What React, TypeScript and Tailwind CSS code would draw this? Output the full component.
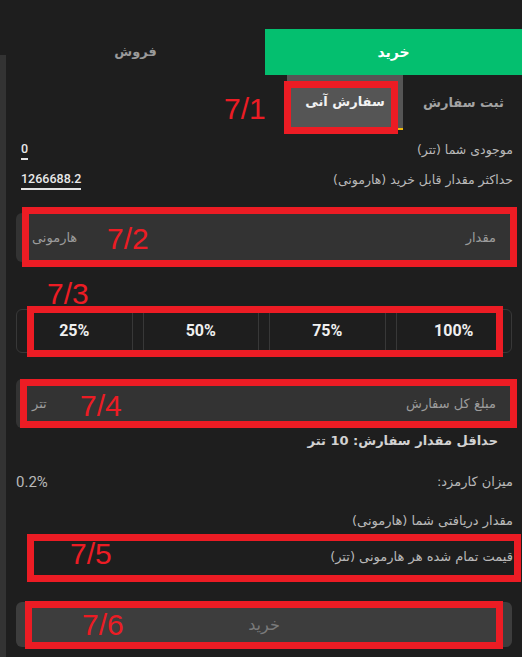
const fa = { fontFamily: "'DejaVu Sans', 'Noto Sans', sans-serif" };

function Row({ label, value, underline }: { label: string; value?: string; underline?: boolean }) {
  return (
    <div className="flex h-[30px] items-center justify-between pr-[9px] pl-[15px]">
      <span className="text-[12.5px] text-[#b9b9b9]">{label}</span>
      {value && (
        <span
          className={`text-[12.5px] font-medium text-[#e8e8e8] ${underline ? 'border-b-2 border-[#e4e4e4] leading-[18px]' : ''}`}
          style={{ fontFamily: 'Roboto, sans-serif' }}
        >
          {value}
        </span>
      )}
    </div>
  );
}

function Field({ label, unit }: { label: string; unit: string }) {
  return (
    <div className="mx-[10px] flex h-[49px] items-center justify-between rounded-md bg-[#333333] pr-[16px] pl-[16px]">
      <span className="text-[13px] text-[#9c9c9c]">{label}</span>
      <span className="text-[13px] text-[#9c9c9c]">{unit}</span>
    </div>
  );
}

const marks = [
  { l: 284, t: 81, w: 114, h: 53 },
  { l: 22, t: 207, w: 495, h: 60 },
  { l: 27, t: 306, w: 476, h: 51 },
  { l: 20, t: 379, w: 497, h: 49 },
  { l: 27, t: 534, w: 494, h: 48 },
  { l: 25, t: 601, w: 478, h: 48 },
];

const tags = [
  { s: '7/1', l: 224, t: 94 },
  { s: '7/2', l: 107, t: 224 },
  { s: '7/3', l: 47, t: 279 },
  { s: '7/4', l: 80, t: 391 },
  { s: '7/5', l: 70, t: 539 },
  { s: '7/6', l: 82, t: 610 },
];

export default function App() {
  return (
    <div className="relative flex h-[657px] w-[522px] overflow-hidden bg-[#1e1e1e]" style={fa}>
      {/* scroll rail */}
      <div className="mt-[55px] w-[6px] shrink-0 bg-[#333333]" />

      <div dir="rtl" className="flex min-w-0 flex-1 flex-col">
        {/* buy / sell */}
        <div className="mt-[29px] flex h-[46px]">
          <div className="flex w-[257px] items-center justify-center bg-[#04bf6f] text-[14px] font-bold text-white">خرید</div>
          <div className="flex flex-1 items-center justify-center text-[13px] font-bold text-[#9a9a9a]">فروش</div>
        </div>

        {/* order type */}
        <div className="flex h-[55px] gap-[2px]">
          <div className="flex w-[117px] items-center justify-center text-[13px] font-bold text-[#a3a3a3]">ثبت سفارش</div>
          <div className="flex w-[116px] items-center justify-center border-b-2 border-[#f0b90b] bg-[#555555] text-[13px] font-bold text-[#f2f2f2]">
            سفارش آنی
          </div>
        </div>

        <div className="mt-[5px]">
          <Row label="موجودی شما (تتر)" value="0" underline />
          <Row label="حداکثر مقدار قابل خرید (هارمونی)" value="1266688.2" underline />
        </div>

        <div className="mt-[18px]">
          <Field label="مقدار" unit="هارمونی" />
        </div>

        <div dir="ltr" className="mx-[10px] mt-[47px] flex h-[44px] gap-[10px]" style={{ fontFamily: 'Roboto, sans-serif' }}>
          {['25%', '50%', '75%', '100%'].map((p, i) => (
            <button
              key={p}
              className={`flex flex-1 items-center justify-center border border-[#383838] text-[16px] font-bold text-[#f0f0f0] ${
                i === 0 ? 'rounded-l-md' : i === 3 ? 'rounded-r-md' : ''
              }`}
            >
              {p}
            </button>
          ))}
        </div>

        <div className="mt-[26px]">
          <Field label="مبلغ کل سفارش" unit="تتر" />
        </div>

        <div className="flex h-[24px] items-center pr-[24px] pt-[2px] text-[13px] font-bold text-[#d2d2d2]">حداقل مقدار سفارش: 10 تتر</div>

        <div className="mt-[18px] flex h-[24px] items-center justify-between pr-[9px] pl-[10px]">
          <span className="text-[13px] text-[#b9b9b9]">میزان کارمزد:</span>
          <span className="text-[15px] text-[#b9b9b9]" style={{ fontFamily: 'Roboto, sans-serif' }}>0.2%</span>
        </div>

        <div className="mt-[15px] flex h-[24px] items-center pr-[9px] text-[13px] text-[#b9b9b9]">مقدار دریافتی شما (هارمونی)</div>
        <div className="mt-[12px] flex h-[24px] items-center pr-[9px] text-[13px] text-[#b9b9b9]">قیمت تمام شده هر هارمونی (تتر)</div>

        <button className="mx-[10px] mt-[33px] flex h-[45px] items-center justify-center rounded-md bg-[#3d3d3d] text-[16px] text-[#7a7a7a]">
          خرید
        </button>
      </div>

      {/* annotations */}
      {marks.map((m, i) => (
        <div
          key={i}
          className="pointer-events-none absolute border-[7px] border-[#ec1c24]"
          style={{ left: m.l, top: m.t, width: m.w, height: m.h }}
        />
      ))}
      {tags.map((t) => (
        <span
          key={t.s}
          className="pointer-events-none absolute text-[30px] leading-none text-[#ec1c24]"
          style={{ left: t.l, top: t.t, fontFamily: "'Liberation Sans', Arial, sans-serif" }}
        >
          {t.s}
        </span>
      ))}
    </div>
  );
}
